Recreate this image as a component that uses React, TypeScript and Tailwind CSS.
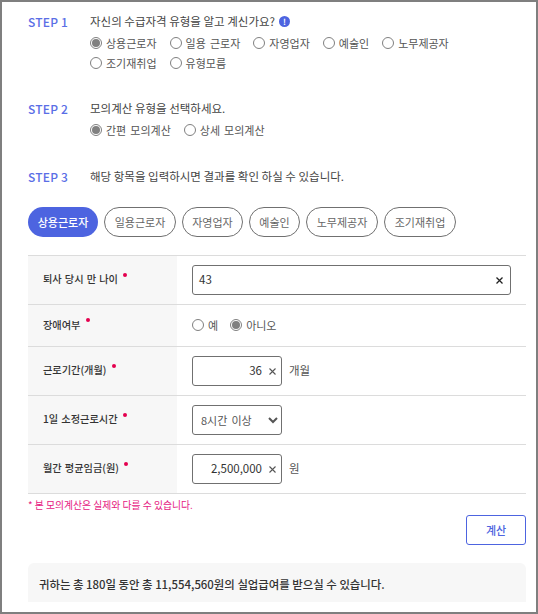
const font = { fontFamily: '"Noto Sans CJK KR", "Noto Sans", sans-serif' };

function Radio({ label, checked }: { label: string; checked?: boolean }) {
  return (
    <label className="flex items-center gap-[4px] text-[11px] leading-[20px] text-[#555] [word-spacing:1.6px]">
      <span className="flex h-[12px] w-[12px] items-center justify-center rounded-full border border-[#808080] bg-white">
        {checked && <span className="h-[8px] w-[8px] rounded-full bg-[#808080]" />}
      </span>
      {label}
    </label>
  );
}

function Step({ name, title, children }: { name: string; title: React.ReactNode; children?: React.ReactNode }) {
  return (
    <div className="flex">
      <div className="w-[62px] text-[12px] font-medium leading-[21px] tracking-[0.2px] text-[#5a6ee6]">{name}</div>
      <div>
        <div className="flex items-center text-[11.5px] leading-[21px] text-[#444]">{title}</div>
        {children}
      </div>
    </div>
  );
}

function Row({ label, h, children }: { label: string; h: string; children: React.ReactNode }) {
  return (
    <div className={`flex border-b border-[#dcdcdc] ${h}`}>
      <div className="flex w-[149px] items-center bg-[#f7f7f7] pb-[2px] pl-[15px] text-[10.2px] font-medium text-[#333] [word-spacing:0.8px]">
        <span>{label}</span>
        <span className="mb-[9px] ml-[5px] h-[4px] w-[4px] rounded-full bg-[#e4004f]" />
      </div>
      <div className="flex flex-1 items-center gap-[7px] pl-[15px] text-[11.5px] text-[#555]">{children}</div>
    </div>
  );
}

function Clear({ bold }: { bold?: boolean }) {
  return (
    <svg width="7" height="7" viewBox="0 0 7 7" className="shrink-0">
      <path
        d="M0.5 0.5L6.5 6.5M6.5 0.5L0.5 6.5"
        stroke={bold ? "#222" : "#555"}
        strokeWidth={bold ? 1.3 : 1.1}
        fill="none"
      />
    </svg>
  );
}

function Amount({ value }: { value: string }) {
  return (
    <div className="flex h-[30px] w-[90px] items-center justify-end gap-[7px] rounded-[3px] border border-[#707070] pr-[5px] text-[11.5px] text-[#333]">
      {value}
      <Clear />
    </div>
  );
}

const tabs = [
  { label: "일용근로자", w: "w-[72px]" },
  { label: "자영업자", w: "w-[61px]" },
  { label: "예술인", w: "w-[51px]" },
  { label: "노무제공자", w: "w-[72px]" },
  { label: "조기재취업", w: "w-[72px]" },
];

export default function App() {
  return (
    <div style={font} className="h-[614px] w-[538px] overflow-hidden border-2 border-[#7f7f7f] bg-white">
      <div className="pl-[26px] pr-[10px] pt-[9px]">
        <Step
          name="STEP 1"
          title={
            <>
              자신의 수급자격 유형을 알고 계신가요?
              <span className="ml-[4px] flex h-[11px] w-[11px] items-center justify-center rounded-full bg-[#4d64e0] text-[8px] font-bold leading-none text-white">
                !
              </span>
            </>
          }
        >
          <div className="mt-[1px] flex flex-col">
            <div className="flex gap-[13px]">
              <Radio label="상용근로자" checked />
              <Radio label="일용 근로자" />
              <Radio label="자영업자" />
              <Radio label="예술인" />
              <Radio label="노무제공자" />
            </div>
            <div className="flex gap-[13px]">
              <Radio label="조기재취업" />
              <Radio label="유형모름" />
            </div>
          </div>
        </Step>

        <div className="mt-[25px]">
          <Step name="STEP 2" title="모의계산 유형을 선택하세요.">
            <div className="mt-[1px] flex gap-[13px]">
              <Radio label="간편 모의계산" checked />
              <Radio label="상세 모의계산" />
            </div>
          </Step>
        </div>

        <div className="mt-[26px]">
          <Step name="STEP 3" title="해당 항목을 입력하시면 결과를 확인 하실 수 있습니다." />
        </div>

        <div className="mt-[20px] flex gap-[6px]">
          <div className="flex h-[30px] w-[70px] items-center justify-center rounded-full bg-[#4d64e0] text-[11px] font-medium text-white">
            상용근로자
          </div>
          {tabs.map((t) => (
            <div
              key={t.label}
              className={`flex h-[30px] items-center justify-center rounded-full border border-[#707070] text-[11px] text-[#666] ${t.w}`}
            >
              {t.label}
            </div>
          ))}
        </div>

        <div className="mt-[18px] border-t border-[#dcdcdc]">
          <Row label="퇴사 당시 만 나이" h="h-[49px]">
            <div className="flex h-[30px] w-[319px] items-center justify-between rounded-[3px] border border-[#707070] pl-[6px] pr-[7px] text-[11.5px] text-[#333]">
              43
              <Clear bold />
            </div>
          </Row>
          <Row label="장애여부" h="h-[42px]">
            <div className="mb-[2px] flex gap-[12px]">
              <Radio label="예" />
              <Radio label="아니오" checked />
            </div>
          </Row>
          <Row label="근로기간(개월)" h="h-[49px]">
            <Amount value="36" />
            개월
          </Row>
          <Row label="1일 소정근로시간" h="h-[49px]">
            <select className="h-[30px] w-[90px] rounded-[3px] border border-[#707070] bg-white pl-[4px] text-[11px] text-[#555] [word-spacing:1.6px]">
              <option>8시간 이상</option>
            </select>
          </Row>
          <Row label="월간 평균임금(원)" h="h-[49px]">
            <Amount value="2,500,000" />
            원
          </Row>
        </div>

        <div className="mt-[4px] text-[9.8px] leading-[15px] text-[#e6177f]">* 본 모의계산은 실제와 다를 수 있습니다.</div>

        <div className="mt-[2px] flex justify-end">
          <button className="h-[30px] w-[60px] rounded-[3px] border border-[#4d64e0] text-[11px] font-medium text-[#4d64e0]">
            계산
          </button>
        </div>

        <div className="mt-[18px] flex h-[39px] items-start rounded-t-[6px] bg-[#f7f7f7] pl-[11px] pt-[13px] text-[11.4px] font-medium leading-[17px] text-[#333]">
          귀하는 총 180일 동안 총 11,554,560원의 실업급여를 받으실 수 있습니다.
        </div>
      </div>
    </div>
  );
}
